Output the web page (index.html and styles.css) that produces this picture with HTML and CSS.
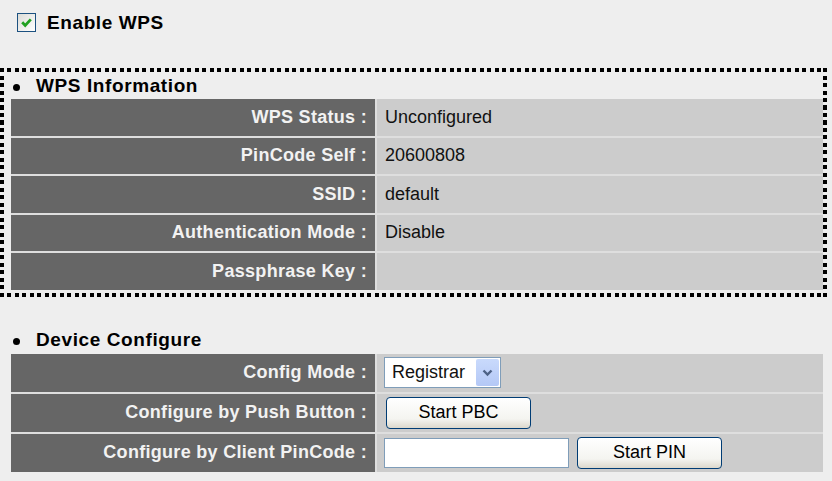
FILE: index.html
```html
<!DOCTYPE html>
<html lang="en">
<head>
    <meta charset="UTF-8">
    <title>WPS Setting</title>
    <link rel="stylesheet" href="styles.css">
</head>
<body>
    <div class="enable-row">
        <span class="check-box">
            <svg width="13" height="13" viewBox="0 0 13 13">
                <path d="M2.2 6.3 L5.2 9.4 L10.8 3.4" fill="none" stroke="#21a121" stroke-width="2.8"/>
            </svg>
        </span>
        <span class="enable-label">Enable WPS</span>
    </div>

    <div class="wps-box">
        <div class="section-title">WPS Information</div>
        <div class="info-grid">
            <div class="label">WPS Status :</div>
            <div class="value">Unconfigured</div>
            <div class="label">PinCode Self :</div>
            <div class="value">20600808</div>
            <div class="label">SSID :</div>
            <div class="value">default</div>
            <div class="label">Authentication Mode :</div>
            <div class="value">Disable</div>
            <div class="label">Passphrase Key :</div>
            <div class="value"></div>
        </div>
    </div>

    <div class="device-section">
        <div class="section-title">Device Configure</div>
        <div class="info-grid device-grid">
            <div class="label">Config Mode :</div>
            <div class="value">
                <div class="select-box">
                    <span class="select-text">Registrar</span>
                    <span class="select-arrow">
                        <svg width="11" height="8" viewBox="0 0 11 8">
                            <path d="M1.5 1.5 L5.5 5.5 L9.5 1.5" fill="none" stroke="#4d6185" stroke-width="2.4"/>
                        </svg>
                    </span>
                </div>
            </div>
            <div class="label">Configure by Push Button :</div>
            <div class="value">
                <button class="xp-button">Start PBC</button>
            </div>
            <div class="label">Configure by Client PinCode :</div>
            <div class="value">
                <input class="pin-input" type="text">
                <button class="xp-button">Start PIN</button>
            </div>
        </div>
    </div>
</body>
</html>
```

FILE: styles.css
```css
body {
    margin: 0;
    background-color: #eeeeee;
    font-family: 'Liberation Sans', Arial, sans-serif;
    color: #000;
    height: 481px;
}
.enable-row {
    display: flex;
    align-items: center;
    padding: 13px 0 0 17px;
    height: 19px;
}
.check-box {
    width: 17px;
    height: 17px;
    border: 1px solid #1c5180;
    background: linear-gradient(135deg, #dcdcd7, #ffffff);
    display: flex;
    align-items: center;
    justify-content: center;
}
.enable-label {
    margin-left: 11px;
    font-weight: bold;
    font-size: 19px;
    letter-spacing: 0.6px;
}
/* square dotted frame, drawn with gradients */
.wps-box {
    margin-top: 36px;
    width: 812px;
    padding: 4px 4px 7px 11px;
    background:
        repeating-linear-gradient(90deg, #000 0 4px, transparent 4px 7.5px) top left / 100% 4px no-repeat,
        repeating-linear-gradient(90deg, #000 0 4px, transparent 4px 7.5px) bottom left / 100% 4px no-repeat,
        repeating-linear-gradient(180deg, #000 0 4px, transparent 4px 7.5px) top left / 4px 100% no-repeat,
        repeating-linear-gradient(180deg, #000 0 4px, transparent 4px 7.5px) top right / 4px 100% no-repeat;
}
.section-title {
    position: relative;
    height: 27px;
    line-height: 27px;
    padding-left: 25px;
    font-weight: bold;
    font-size: 19px;
    letter-spacing: 0.6px;
}
.section-title::before {
    content: "";
    position: absolute;
    left: 2px;
    top: 12px;
    width: 7px;
    height: 7px;
    border-radius: 50%;
    background-color: #000;
}
.info-grid {
    display: grid;
    grid-template-columns: 364px 1fr;
    grid-auto-rows: 36.5px;
    gap: 2px;
    background-color: #dedede;
}
.label {
    background-color: #666666;
    color: #f2f2f2;
    font-weight: bold;
    font-size: 18px;
    letter-spacing: 0.3px;
    padding-right: 8px;
    display: flex;
    align-items: center;
    justify-content: flex-end;
}
.value {
    background-color: #cccccc;
    font-size: 18px;
    color: #111;
    padding-left: 8px;
    display: flex;
    align-items: center;
}
.device-section {
    margin: 29px 0 0 11px;
    width: 812px;
}
.device-section .section-title {
    height: 28px;
    line-height: 28px;
}
.device-grid {
    grid-auto-rows: 38px;
}
.device-grid .value {
    padding-left: 7px;
}
.select-box {
    width: 115px;
    height: 29px;
    border: 1px solid #7f9db9;
    background-color: #fff;
    display: flex;
    align-items: center;
    justify-content: space-between;
}
.select-text {
    padding-left: 7px;
    font-size: 18px;
}
.select-arrow {
    width: 23px;
    height: 27px;
    margin-right: 1px;
    background: linear-gradient(#c9dafc, #b4c8f6);
    border-radius: 2px;
    display: flex;
    align-items: center;
    justify-content: center;
}
.xp-button {
    width: 145px;
    height: 32px;
    margin: 0 0 0 2px;
    border: 1px solid #003c74;
    border-radius: 4px;
    background: linear-gradient(#ffffff, #f4f4f0 70%, #dcd8cc);
    font-family: 'Liberation Sans', Arial, sans-serif;
    font-size: 18px;
    color: #000;
    padding: 0;
}
.pin-input {
    width: 181px;
    height: 28px;
    border: 1px solid #7f9db9;
    background-color: #fff;
    padding: 0 1px;
    margin: 0 6px 0 0;
}
```
